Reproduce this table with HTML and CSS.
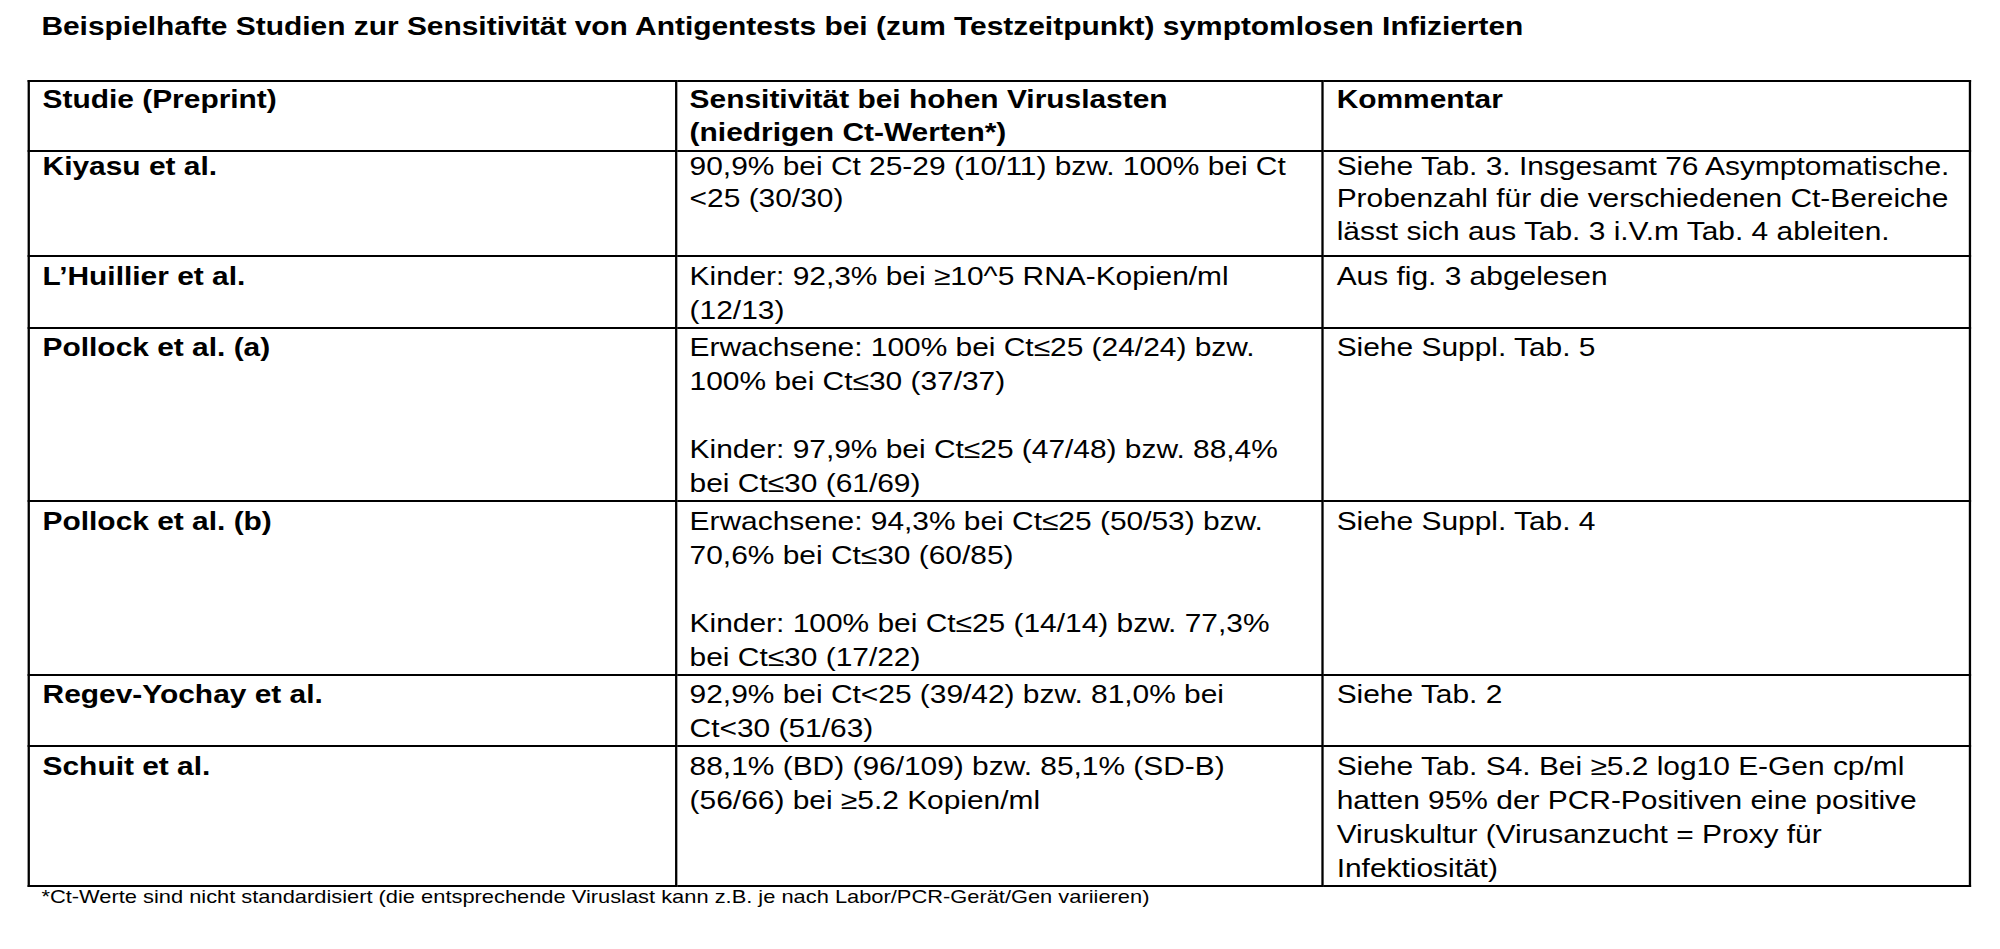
FILE: index.html
```html
<!DOCTYPE html>
<html lang="de">
<head>
<meta charset="utf-8">
<title>Beispielhafte Studien zur Sensitivität von Antigentests</title>
<link rel="stylesheet" href="styles.css">
</head>
<body>
<main class="page">
  <h1 class="title">Beispielhafte Studien zur Sensitivität von Antigentests bei (zum Testzeitpunkt) symptomlosen Infizierten</h1>
  <table class="studies">
    <colgroup>
      <col class="col-study">
      <col class="col-sens">
      <col class="col-comment">
    </colgroup>
    <thead>
      <tr class="head-row">
        <th>Studie (Preprint)</th>
        <th>Sensitivität bei hohen Viruslasten<br>(niedrigen Ct-Werten*)</th>
        <th>Kommentar</th>
      </tr>
    </thead>
    <tbody>
      <tr class="row-tight">
        <th><div class="cell-text">Kiyasu et al.</div></th>
        <td><div class="cell-text">90,9% bei Ct 25-29 (10/11) bzw. 100% bei Ct<br>&lt;25 (30/30)</div></td>
        <td><div class="cell-text">Siehe Tab. 3. Insgesamt 76 Asymptomatische.<br>Probenzahl für die verschiedenen Ct-Bereiche<br>lässt sich aus Tab. 3 i.V.m Tab. 4 ableiten.</div></td>
      </tr>
      <tr>
        <th>L’Huillier et al.</th>
        <td>Kinder: 92,3% bei ≥10^5 RNA-Kopien/ml<br>(12/13)</td>
        <td>Aus fig. 3 abgelesen</td>
      </tr>
      <tr>
        <th>Pollock et al. (a)</th>
        <td>
          <p class="para">Erwachsene: 100% bei Ct≤25 (24/24) bzw.<br>100% bei Ct≤30 (37/37)</p>
          <p class="para">Kinder: 97,9% bei Ct≤25 (47/48) bzw. 88,4%<br>bei Ct≤30 (61/69)</p>
        </td>
        <td>Siehe Suppl. Tab. 5</td>
      </tr>
      <tr>
        <th>Pollock et al. (b)</th>
        <td>
          <p class="para">Erwachsene: 94,3% bei Ct≤25 (50/53) bzw.<br>70,6% bei Ct≤30 (60/85)</p>
          <p class="para">Kinder: 100% bei Ct≤25 (14/14) bzw. 77,3%<br>bei Ct≤30 (17/22)</p>
        </td>
        <td>Siehe Suppl. Tab. 4</td>
      </tr>
      <tr>
        <th>Regev-Yochay et al.</th>
        <td>92,9% bei Ct&lt;25 (39/42) bzw. 81,0% bei<br>Ct&lt;30 (51/63)</td>
        <td>Siehe Tab. 2</td>
      </tr>
      <tr>
        <th>Schuit et al.</th>
        <td>88,1% (BD) (96/109) bzw. 85,1% (SD-B)<br>(56/66) bei ≥5.2 Kopien/ml</td>
        <td>Siehe Tab. S4. Bei ≥5.2 log10 E-Gen cp/ml<br>hatten 95% der PCR-Positiven eine positive<br>Viruskultur (Virusanzucht = Proxy für<br>Infektiosität)</td>
      </tr>
    </tbody>
  </table>
  <p class="footnote">*Ct-Werte sind nicht standardisiert (die entsprechende Viruslast kann z.B. je nach Labor/PCR-Gerät/Gen variieren)</p>
</main>
</body>
</html>
```

FILE: styles.css
```css
html, body {
  margin: 0;
  padding: 0;
  background: #ffffff;
}

body {
  font-family: "Liberation Sans", Arial, Helvetica, sans-serif;
  color: #000000;
  overflow: hidden;
}

/* The source document is rendered slightly wide; the page is stretched horizontally. */
.page {
  width: 1730px;
  padding: 10px 0 0 24px;
  transform: scaleX(1.15);
  transform-origin: 0 0;
}

.title {
  margin: 0 0 38px 0;
  padding-left: 12px;
  font-size: 26px;
  line-height: 32px;
  font-weight: bold;
}

.studies {
  width: 1690px;
  table-layout: fixed;
  border-collapse: collapse;
  border: 2px solid #000000;
  font-size: 26px;
}

.col-study,
.col-sens,
.col-comment {
  width: 33.333%;
}

.studies th,
.studies td {
  border: 2px solid #000000;
  padding: 1.5px 11px 0 11px;
  line-height: 34px;
  text-align: left;
  vertical-align: top;
  font-weight: normal;
}

.studies th {
  font-weight: bold;
}

.head-row th {
  line-height: 33px;
  padding-top: 1px;
  padding-bottom: 1px;
}

.row-tight th,
.row-tight td {
  line-height: 32.5px;
  padding-top: 0;
  padding-bottom: 8px;
}

.cell-text {
  margin-top: -2.5px;
}

.para {
  margin: 0 0 34px 0;
}

.para:last-child {
  margin-bottom: 0;
}

.footnote {
  margin: 0;
  padding-left: 12px;
  font-size: 19px;
  line-height: 20px;
}
```
